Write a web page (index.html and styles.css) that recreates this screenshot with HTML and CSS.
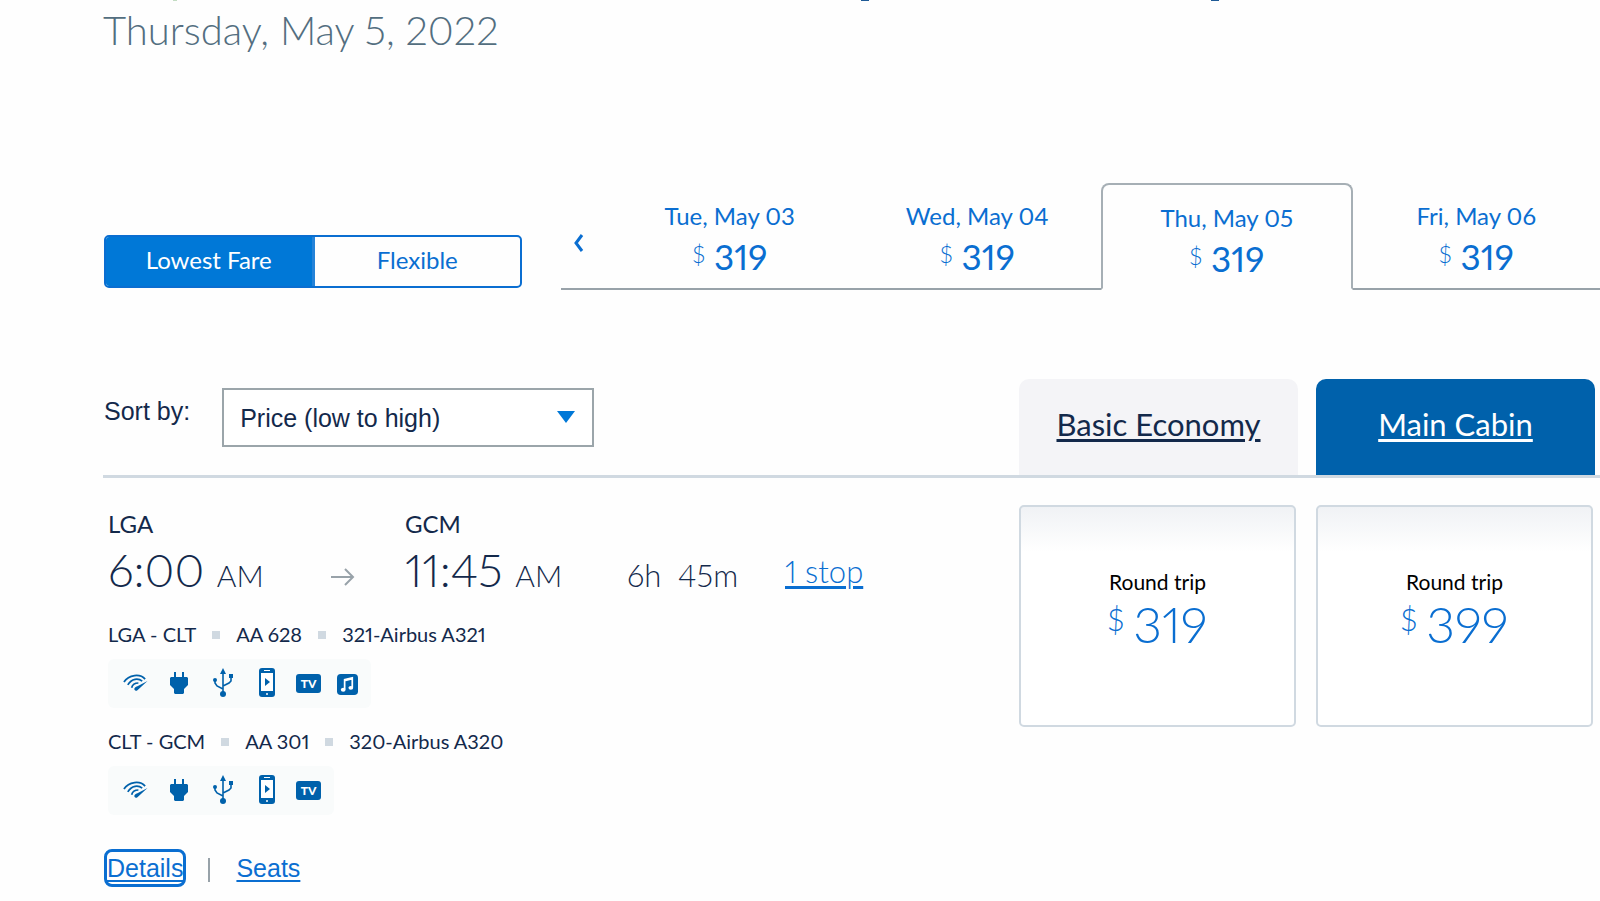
FILE: index.html
```html
<!DOCTYPE html>
<html lang="en">
<head>
    <meta charset="UTF-8">
    <meta name="viewport" content="width=device-width, initial-scale=1.0">
    <title>Choose flights</title>
    <link rel="stylesheet" href="styles.css">
</head>
<body>
    <!-- icons -->
    <svg class="sprite" aria-hidden="true">
        <symbol id="wifi" viewBox="0 0 26 18">
            <path d="M1 8C6 0 18-1 23 5M5 11C9 4 16 4 20 7M9 14C10 10 13 9 16 9" fill="none" stroke="currentColor" stroke-width="1.8"/>
            <path d="M25.500 7L15 16.500C13 18 11 16 12 14.500C12.500 13.500 14 13 15 12.500Z" fill="currentColor"/>
        </symbol>
        <symbol id="plug" viewBox="0 0 18 22">
            <path d="M4 0h2v5h6V0h2v5h3l1 1v7l-4 4v4l-1 1H5l-1-1v-4l-4-4V6l1-1h3z" fill="currentColor"/>
        </symbol>
        <symbol id="usb" viewBox="0 0 20 30">
            <path d="M10 5v20M2 12v3l2 3 6 3M18 9v4l-2 2-6 3" fill="none" stroke="currentColor" stroke-width="1.6"/>
            <path d="M10 0l3 6H7zM16 6h4v4h-4z" fill="currentColor"/>
            <circle cx="2" cy="12" r="2" fill="currentColor"/>
            <circle cx="10" cy="26" r="3" fill="currentColor"/>
        </symbol>
        <symbol id="phone" viewBox="0 0 16 30">
            <rect width="16" height="29" rx="3" fill="currentColor"/>
            <path d="M2 5h12v18H2zM5 2h6v1H5z" fill="#fff"/>
            <circle cx="8" cy="26" r="1" fill="#fff"/>
            <path d="M6 10l5 4-5 4z" fill="currentColor"/>
        </symbol>
        <symbol id="music" viewBox="0 0 22 22">
            <rect width="22" height="22" rx="4" fill="currentColor"/>
            <path d="M8 16V6l8-2v10M8 7l8-2" fill="none" stroke="#fff" stroke-width="1.800"/>
            <ellipse cx="6.500" cy="16.500" rx="2.500" ry="2" fill="#fff"/>
            <ellipse cx="14.500" cy="14.500" rx="2.500" ry="2" fill="#fff"/>
        </symbol>
    </svg>

    <main>
        <div class="topEdge"><i class="green"></i><i></i><i></i></div>
        <h1>Thursday, May 5, 2022</h1>

        <div class="dateBar">
            <div class="fareType">
                <button class="on">Lowest Fare</button>
                <button>Flexible</button>
            </div>
            <nav class="dates">
                <button class="prev" aria-label="Previous dates">
                    <svg width="11" height="18" viewBox="0 0 11 18"><path d="M9 1L3 9l6 8" fill="none" stroke="currentColor" stroke-width="3"/></svg>
                </button>
                <button class="date">Tue, May 03<span class="amount"><small>$</small>319</span></button>
                <button class="date">Wed, May 04<span class="amount"><small>$</small>319</span></button>
                <button class="date active">Thu, May 05<span class="amount"><small>$</small>319</span></button>
                <button class="date">Fri, May 06<span class="amount"><small>$</small>319</span></button>
            </nav>
        </div>

        <div class="resultHead">
            <div class="sort">
                <label for="sortBy">Sort by:</label>
                <div class="selectBox">
                    <select id="sortBy">
                        <option>Price (low to high)</option>
                    </select>
                    <svg class="caret" width="18" height="12" viewBox="0 0 18 12"><path d="M0 0h18L9 12z" fill="currentColor"/></svg>
                </div>
            </div>
            <a href="#" class="cabin">Basic Economy</a>
            <a href="#" class="cabin mainCabin">Main Cabin</a>
        </div>

        <div class="result">
            <div class="flight">
                <div class="times">
                    <div class="depart">
                        <div class="airport">LGA</div>
                        <div class="time">6:00 <small>AM</small></div>
                    </div>
                    <svg class="arrow" width="24" height="18" viewBox="0 0 24 18"><path d="M0 9h22M14 1l8 8-8 8" fill="none" stroke="currentColor" stroke-width="2"/></svg>
                    <div class="arrive">
                        <div class="airport">GCM</div>
                        <div class="time">11:45 <small>AM</small></div>
                    </div>
                    <div class="duration">6h&nbsp; 45m</div>
                    <a href="#" class="stops">1 stop</a>
                </div>

                <div class="leg"><span>LGA - CLT</span><span>AA 628</span><span>321-Airbus A321</span></div>
                <div class="amenities">
                    <svg width="25" height="18"><use href="#wifi"/></svg>
                    <svg class="plug" width="18" height="22"><use href="#plug"/></svg>
                    <svg class="usb" width="20" height="30"><use href="#usb"/></svg>
                    <svg width="16" height="30"><use href="#phone"/></svg>
                    <span class="tv">TV</span>
                    <svg class="music" width="21" height="21"><use href="#music"/></svg>
                </div>

                <div class="leg"><span>CLT - GCM</span><span>AA 301</span><span>320-Airbus A320</span></div>
                <div class="amenities">
                    <svg width="25" height="18"><use href="#wifi"/></svg>
                    <svg class="plug" width="18" height="22"><use href="#plug"/></svg>
                    <svg class="usb" width="20" height="30"><use href="#usb"/></svg>
                    <svg width="16" height="30"><use href="#phone"/></svg>
                    <span class="tv">TV</span>
                </div>

                <div class="links">
                    <a href="#" class="focused">Details</a>
                    <span class="bar"></span>
                    <a href="#">Seats</a>
                </div>
            </div>
            <button class="fare">Round trip<span class="price"><small>$</small>319</span></button>
            <button class="fare">Round trip<span class="price"><small>$</small>399</span></button>
        </div>
    </main>
</body>
</html>
```
FILE: styles.css
```css
* {
    box-sizing: border-box;
}
body {
    margin: 0;
    background-color: #fefefe;
    color: #13294b;
    font-family: Lato, "Open Sans", sans-serif;
    font-size: 24px;
    font-variant-numeric: proportional-nums;
    overflow-x: hidden;
}
button {
    font: inherit;
    font-variant-numeric: inherit;
    color: #0a6ed1;
    background: none;
    border: 0;
    padding: 0;
    cursor: pointer;
}
a {
    color: #0a6ed1;
    text-underline-offset: 3px;
}
.sprite {
    display: none;
}
main {
    padding-left: 103px;
}

/* bottom edge of the route title scrolled off above */
.topEdge {
    display: flex;
    height: 1px;
    padding-left: 70px;
}
.topEdge i {
    width: 8px;
    height: 1px;
    margin-right: 342px;
    background-color: #1f5a96;
}
.topEdge .green {
    width: 4px;
    margin-right: 684px;
    background-color: #c3dcc3;
}
h1 {
    margin: 4px 0 0;
    font-size: 40px;
    font-weight: 300;
    line-height: 50px;
    color: #536e80;
}

/* fare switch + dates */
.dateBar {
    display: flex;
    align-items: flex-end;
    margin-top: 128px;
}
.fareType {
    display: flex;
    width: 418px;
    height: 53px;
    margin: 0 39px 2px 1px;
    border: 2px solid #0a6ed1;
    border-radius: 5px;
    overflow: hidden;
}
.fareType button {
    flex: 1;
    padding-bottom: 4px;
}
.fareType .on {
    color: #fff;
    background-color: #0078d7;
    border-right: 3px solid #2583d8;
}
.dates {
    display: flex;
    flex: 1;
}
.prev {
    width: 45px;
    padding: 14px 10px 0 0;
    border-bottom: 2px solid #98a2a9;
}
.date {
    flex: 1;
    height: 107px;
    padding-top: 6px;
    line-height: 28px;
    border-bottom: 2px solid #98a2a9;
}
.date.active {
    padding-top: 8px;
    border: 2px solid #a6afb5;
    border-bottom-color: transparent;
    border-radius: 8px 8px 0 0;
}
.amount {
    display: flex;
    justify-content: center;
    gap: 9px;
    margin-top: 6px;
    font-size: 35px;
    line-height: 40px;
}
.amount small {
    font-size: 24px;
    font-weight: 300;
    line-height: 36px;
}

/* sort row and cabin tabs */
.resultHead, .result {
    display: grid;
    grid-template-columns: 1fr 279px 279px;
    column-gap: 18px;
    padding-right: 5px;
}
.resultHead {
    margin-top: 89px;
    border-bottom: 3px solid #d0d9e1;
}
.sort {
    display: flex;
    align-items: center;
    gap: 32px;
    padding: 9px 0 28px 1px;
    font-family: "Liberation Sans", Arial, sans-serif;
    font-size: 25px;
}
.sort label {
    padding-bottom: 12px;
}
.selectBox {
    position: relative;
    width: 372px;
}
.selectBox select {
    width: 100%;
    height: 59px;
    padding: 0 16px;
    appearance: none;
    font: inherit;
    color: inherit;
    background-color: #fff;
    border: 2px solid #9ba5aa;
    border-radius: 0;
}
.caret {
    position: absolute;
    top: 23px;
    right: 19px;
    color: #0078d7;
    pointer-events: none;
}
.cabin {
    display: flex;
    align-items: center;
    justify-content: center;
    height: 96px;
    padding-bottom: 6px;
    font-size: 31px;
    color: #13294b;
    background-color: #f4f4f7;
    border-radius: 10px 10px 0 0;
}
.mainCabin {
    color: #fff;
    background-color: #0061ab;
}

/* flight row */
.result {
    padding-top: 27px;
}
.flight {
    padding-left: 5px;
}
.times {
    display: flex;
    align-items: flex-end;
    height: 94px;
    font-weight: 300;
}
.depart {
    width: 223px;
}
.arrow {
    margin: 0 50px 13px 0;
    color: #98a2a9;
}
.arrive {
    width: 222px;
}
.airport {
    font-weight: 400;
    line-height: 30px;
}
.time {
    font-size: 46px;
    line-height: 60px;
    margin-bottom: -6px;
    padding-top: 1px;
    white-space: nowrap;
}
.time small {
    font-size: 30px;
}
.duration, .stops {
    font-size: 31px;
    line-height: 48px;
}
.duration {
    width: 158px;
}
.stops {
    padding-bottom: 4px;
}
.leg {
    display: flex;
    align-items: center;
    height: 30px;
    margin-top: 20px;
    font-size: 20px;
}
.leg span + span::before {
    content: "";
    display: inline-block;
    width: 8px;
    height: 8px;
    margin: 0 16px 3px;
    background-color: #d0d9e1;
}
.amenities {
    display: flex;
    align-items: center;
    width: max-content;
    height: 49px;
    margin: 10px 0 28px;
    padding: 0 13px 2px 15px;
    color: #0061ab;
    background-color: #f9fbfb;
    border-radius: 6px;
}
.amenities + .leg {
    margin-top: -10px;
}
.plug {
    margin-left: 22px;
}
.usb {
    margin: 0 26px 0 25px;
}
.tv {
    width: 25px;
    margin: 2px 0 0 21px;
    font-size: 12px;
    font-weight: 900;
    line-height: 19px;
    text-align: center;
    color: #fff;
    background-color: #0061ab;
    border-radius: 3px;
}
.music {
    margin: 4px 0 0 16px;
}
.links {
    display: flex;
    align-items: center;
    margin: 34px 0 0 -4px;
    font-family: "Liberation Sans", Arial, sans-serif;
    font-size: 25px;
}
.links .focused {
    padding: 1px 0;
    border: 3px solid #0a6ed1;
    border-radius: 8px;
    line-height: 30px;
}
.bar {
    width: 2px;
    height: 24px;
    margin: 4px 26px 0 22px;
    background-color: #98a2a9;
}

/* fare cards */
.fare {
    height: 222px;
    margin-right: 2px;
    padding-bottom: 10px;
    font-size: 21px;
    color: #000;
    background: linear-gradient(#f0f2f5, #fff 45px);
    border: 2px solid #d0d9e1;
    border-radius: 5px;
}
.price {
    display: flex;
    justify-content: center;
    gap: 9px;
    font-size: 50px;
    font-weight: 300;
    line-height: 60px;
    color: #0a6ed1;
}
.price small {
    font-size: 31px;
    line-height: 50px;
}
```
